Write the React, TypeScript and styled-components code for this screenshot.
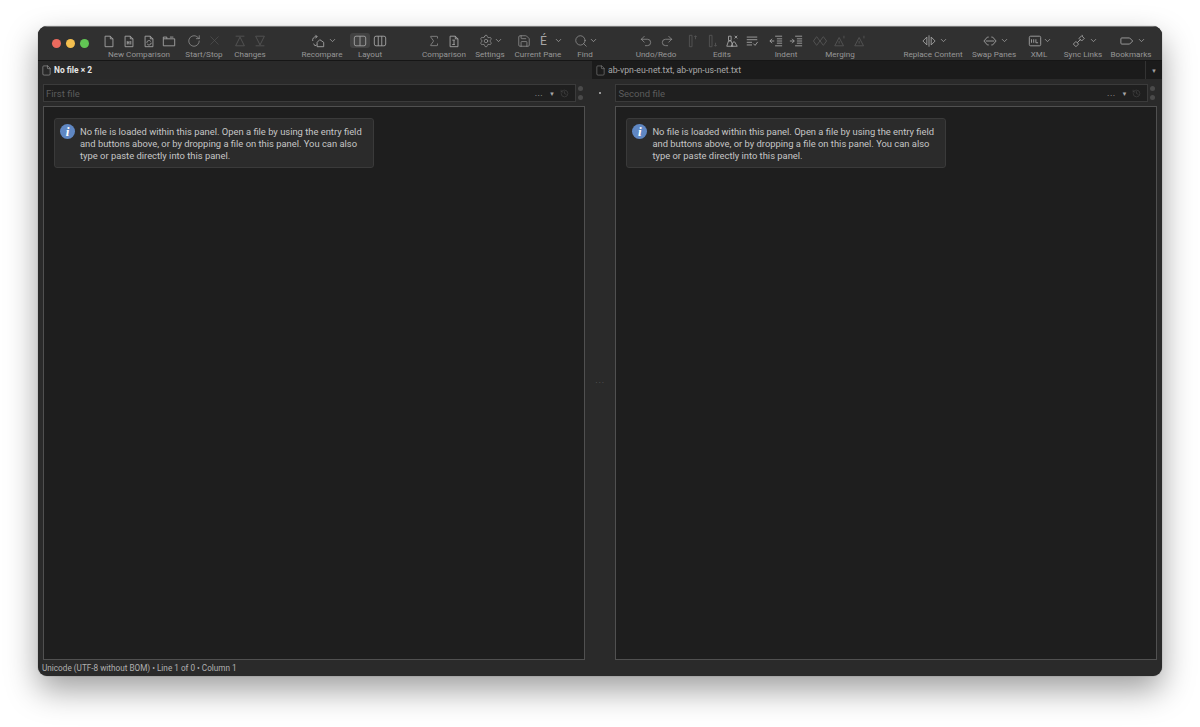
import * as React from 'react';
import styled, { createGlobalStyle } from 'styled-components';
import { ChevronDown, File, History, Redo2, RotateCw, Save, Search, Settings, Sigma, Undo2, X } from 'lucide-react';

const GlobalStyle = createGlobalStyle`
	html, body {
		margin: 0;
		padding: 0;
		background: #fff;
	}
	* {
		box-sizing: border-box;
	}
`;

const Page = styled.div`
	width: 1200px;
	height: 727px;
	padding: 26px 38px 51px;
	font-family: Roboto, "Liberation Sans", sans-serif;
	overflow: hidden;
`;

const Window = styled.div`
	height: 650px;
	display: flex;
	flex-direction: column;
	background: #2a2a2a;
	border-radius: 9px;
	overflow: hidden;
	box-shadow: 0 14px 32px rgba(0, 0, 0, 0.38), 0 0 1px rgba(0, 0, 0, 0.6);
`;

const Toolbar = styled.div`
	height: 35px;
	flex: none;
	display: flex;
	background: #303030;
	border-top: 1px solid #777;
	border-bottom: 1px solid #161616;
`;

const Lights = styled.div`
	width: 61px;
	flex: none;
	display: flex;
	gap: 5px;
	padding: 12px 0 0 14px;
`;

const Light = styled.span<{ $color: string }>`
	width: 9px;
	height: 9px;
	border-radius: 50%;
	background: ${p => p.$color};
`;

const ToolGroup = styled.div<{ $w: number; $ml: number }>`
	width: ${p => p.$w}px;
	margin-left: ${p => p.$ml}px;
	flex: none;
	display: flex;
	flex-direction: column;
	align-items: center;
`;

const IconRow = styled.div`
	height: 22px;
	display: flex;
	align-items: center;
	justify-content: center;
	padding-top: 5px;
`;

const ToolLabel = styled.div`
	font-size: 8.1px;
	line-height: 11px;
	color: #979797;
	white-space: nowrap;
`;

const Slot = styled.span<{ $off?: boolean; $on?: boolean; $w?: number }>`
	width: ${p => p.$w ?? 20}px;
	height: 15px;
	display: flex;
	align-items: center;
	justify-content: center;
	color: ${p => (p.$off ? '#565656' : '#a6a6a6')};
	font-size: 12px;
	border-radius: 3px;
	background: ${p => (p.$on ? '#424242' : 'transparent')};
`;

const Caret = () => (
	<Slot $w={9}>
		<ChevronDown size={9} strokeWidth={2} />
	</Slot>
);

const Svg = styled.svg.attrs({ viewBox: '0 0 16 16', fill: 'none', stroke: 'currentColor', strokeWidth: 1 })`
	width: 14px;
	height: 14px;
`;

const Doc = ({ children }: { children?: React.ReactNode }) => (
	<Svg>
		<path d="M3.5 2.5h6l3 3v9h-9z M9.5 2.5v3h3" />
		{children}
	</Svg>
);

const FolderTab = () => (
	<Svg>
		<path d="M1.5 5.5h13v8h-13z M1.5 5.5v-2h4v2 M9 3.5h4" />
	</Svg>
);

const TriUp = () => (
	<Svg>
		<path d="M3 2.500h10 M8 3.500l5 10h-10z" />
	</Svg>
);

const TriDown = () => (
	<Svg>
		<path d="M3 13.500h10 M8 12.500l5-10h-10z" />
	</Svg>
);

const RecompareIcon = () => (
	<Svg>
		<path d="M2 8a4 4 0 0 1 4-5h1 M5 1l2 2-2 2 M7 9.500l3-3 4.500 3v5h-7.500z M3 11l1.500 2.500 2-1" />
	</Svg>
);

const Columns = ({ n }: { n: number }) => (
	<Svg>
		<rect x="1.500" y="2.500" width="13" height="11" rx="2" />
		{n === 2 ? <path d="M8 2.500v11" /> : <path d="M6 2.500v11 M10 2.500v11" />}
	</Svg>
);

const BarUp = () => (
	<Svg>
		<path d="M5 1.500h3v13h-3z M12 6v-4 M10.500 3.500l1.500-1.500 1.500 1.500" />
	</Svg>
);

const BarDown = () => (
	<Svg>
		<path d="M5 1.500h3v13h-3z M12 10v4 M10.500 12.500l1.500 1.500 1.500-1.500" />
	</Svg>
);

const PeopleX = () => (
	<Svg>
		<path d="M4 2.500h3v5h-3z M2 14l2-6h3l2 6z M7 14l2.500-5 1.500 0 3 5z M11 2l3 3 M14 2l-3 3" />
	</Svg>
);

const ListCheck = () => (
	<Svg>
		<path d="M2 3.500h12 M2 6.500h12 M2 9.500h6 M2 12.500h6 M9.500 11l2 2 3-4" />
	</Svg>
);

const Outdent = () => (
	<Svg>
		<path d="M7 2.500h8 M9 5.500h6 M9 8h6 M9 10.500h6 M7 13.500h8 M6 8h-5 M3.500 5.500l-2.500 2.500 2.500 2.500" />
	</Svg>
);

const Indent = () => (
	<Svg>
		<path d="M7 2.500h8 M9 5.500h6 M9 8h6 M9 10.500h6 M7 13.500h8 M1 8h5 M3.500 5.500l2.500 2.500-2.500 2.500" />
	</Svg>
);

const Diamonds = () => (
	<Svg>
		<path d="M4.200 3l3.700 5-3.700 5-3.700-5z M11.800 3l3.700 5-3.700 5-3.700-5z" />
	</Svg>
);

const WarnUp = () => (
	<Svg>
		<path d="M7 4l5 9.500h-10z M7 8v3 M12.500 5v-3" />
	</Svg>
);

const ReplaceIcon = () => (
	<Svg>
		<path d="M5.500 3.500l-4.500 4.500 4.500 4.500z M10.500 3.500l4.500 4.500-4.500 4.500z M8 1.500v13" />
	</Svg>
);

const SwapIcon = () => (
	<Svg>
		<path d="M5 3.500l-4 4.500 4 4.500 M11 3.500l4 4.500-4 4.500 M5 3.500h1.500 M5 12.500h1.500 M11 3.500h-1.500 M11 12.500h-1.500 M3 8h10" />
	</Svg>
);

const XmlIcon = () => (
	<Svg>
		<rect x="1.500" y="2.500" width="13" height="11" rx="1.500" />
		<path d="M4 6v4 M6.500 6v4 M9 6v4h2.500" />
	</Svg>
);

const LinkIcon = () => (
	<Svg>
		<path d="M1.500 11.500l3-3 3 3-3 3z M8 5l3-3 3 3-3 3z M6 10l4-4 M11.500 1l.5 1" />
	</Svg>
);

const TagIcon = () => (
	<Svg>
		<path d="M2 4.500h9l3.500 3.500-3.500 3.500h-9a1 1 0 0 1-1-1v-5a1 1 0 0 1 1-1z" />
	</Svg>
);

const Lucide = {
	size: 14,
	strokeWidth: 1.1
};

interface ToolDef {
	label: string;
	w: number;
	ml: number;
	icons: React.ReactNode;
}

const tools: ToolDef[] = [
	{
		label: 'New Comparison', w: 80, ml: 0, icons: (
			<>
				<Slot><Doc /></Slot>
				<Slot><Doc><path d="M6 8v4 M8 8v4 M6 10h2 M10 8v4" /></Doc></Slot>
				<Slot><Doc><path d="M5.500 10a2.500 2.500 0 0 1 4.500-1.500 M10.500 10a2.500 2.500 0 0 1-4.500 1.500" /></Doc></Slot>
				<Slot><FolderTab /></Slot>
			</>
		)
	},
	{
		label: 'Start/Stop', w: 40, ml: 5, icons: (
			<>
				<Slot><RotateCw {...Lucide} /></Slot>
				<Slot $off><X size={15} strokeWidth={1} /></Slot>
			</>
		)
	},
	{
		label: 'Changes', w: 40, ml: 6, icons: (
			<>
				<Slot $off><TriUp /></Slot>
				<Slot $off><TriDown /></Slot>
			</>
		)
	},
	{
		label: 'Recompare', w: 44, ml: 30, icons: (
			<>
				<Slot><RecompareIcon /></Slot>
				<Caret />
			</>
		)
	},
	{
		label: 'Layout', w: 40, ml: 6, icons: (
			<>
				<Slot $on><Columns n={2} /></Slot>
				<Slot><Columns n={3} /></Slot>
			</>
		)
	},
	{
		label: 'Comparison', w: 46, ml: 31, icons: (
			<>
				<Slot><Sigma {...Lucide} /></Slot>
				<Slot><Doc><path d="M6 7h3 M8 7v5 M6 12h3" /></Doc></Slot>
			</>
		)
	},
	{
		label: 'Settings', w: 34, ml: 6, icons: (
			<>
				<Slot $w={16}><Settings {...Lucide} /></Slot>
				<Caret />
			</>
		)
	},
	{
		label: 'Current Pane', w: 50, ml: 6, icons: (
			<>
				<Slot><Save {...Lucide} /></Slot>
				<Slot>É</Slot>
				<Caret />
			</>
		)
	},
	{
		label: 'Find', w: 30, ml: 7, icons: (
			<>
				<Slot $w={16}><Search {...Lucide} /></Slot>
				<Caret />
			</>
		)
	},
	{
		label: 'Undo/Redo', w: 44, ml: 34, icons: (
			<>
				<Slot $w={21}><Undo2 {...Lucide} /></Slot>
				<Slot $w={21}><Redo2 {...Lucide} /></Slot>
			</>
		)
	},
	{
		label: 'Edits', w: 80, ml: 4, icons: (
			<>
				<Slot $off><BarUp /></Slot>
				<Slot $off><BarDown /></Slot>
				<Slot><PeopleX /></Slot>
				<Slot><ListCheck /></Slot>
			</>
		)
	},
	{
		label: 'Indent', w: 40, ml: 4, icons: (
			<>
				<Slot><Outdent /></Slot>
				<Slot><Indent /></Slot>
			</>
		)
	},
	{
		label: 'Merging', w: 60, ml: 4, icons: (
			<>
				<Slot $off><Diamonds /></Slot>
				<Slot $off><WarnUp /></Slot>
				<Slot $off><WarnUp /></Slot>
			</>
		)
	},
	{
		label: 'Replace Content', w: 64, ml: 31, icons: (
			<>
				<Slot><ReplaceIcon /></Slot>
				<Caret />
			</>
		)
	},
	{
		label: 'Swap Panes', w: 46, ml: 6, icons: (
			<>
				<Slot><SwapIcon /></Slot>
				<Caret />
			</>
		)
	},
	{
		label: 'XML', w: 30, ml: 7, icons: (
			<>
				<Slot $w={16}><XmlIcon /></Slot>
				<Caret />
			</>
		)
	},
	{
		label: 'Sync Links', w: 42, ml: 8, icons: (
			<>
				<Slot><LinkIcon /></Slot>
				<Caret />
			</>
		)
	},
	{
		label: 'Bookmarks', w: 42, ml: 6, icons: (
			<>
				<Slot><TagIcon /></Slot>
				<Caret />
			</>
		)
	}
];

const TabBar = styled.div`
	height: 18px;
	flex: none;
	display: flex;
	background: #1b1b1b;
`;

const Tab = styled.div<{ $active?: boolean }>`
	display: flex;
	align-items: center;
	gap: 2px;
	padding-left: 3px;
	font-size: ${p => (p.$active ? 8.4 : 8.7)}px;
	font-weight: ${p => (p.$active ? 700 : 400)};
	color: ${p => (p.$active ? '#e6e6e6' : '#a8a8a8')};
	background: ${p => (p.$active ? '#292929' : '#1b1b1b')};
	width: ${p => (p.$active ? 552 : 553)}px;
	flex: none;
	svg {
		color: ${p => (p.$active ? '#bdbdbd' : '#999')};
	}
`;

const TabGap = styled.div`
	width: 2px;
	flex: none;
	background: #292929;
`;

const TabMenu = styled.div`
	flex: 1;
	display: flex;
	align-items: center;
	justify-content: center;
	border-left: 1px solid #333;
	color: #a0a0a0;
	font-size: 6px;
`;

const Body = styled.div`
	flex: 1;
	min-height: 0;
	display: grid;
	grid-template-columns: 542px 30.4px 541.6px;
	padding: 5px 5px 0;
`;

const Pane = styled.div`
	display: flex;
	flex-direction: column;
	gap: 4px;
	min-height: 0;
`;

const EntryRow = styled.div`
	height: 18px;
	flex: none;
	display: flex;
`;

const Entry = styled.div`
	width: 533px;
	flex: none;
	display: flex;
	align-items: center;
	padding: 0 6px 0 2px;
	background: #1f1f1f;
	border: 1px solid #3b3b3b;
	color: #5c5c5c;
	font-size: 9.5px;
`;

const EntryText = styled.span`
	flex: 1;
`;

const EntryDots = styled.span`
	color: #a0a0a0;
	font-size: 9px;
	margin-right: 6px;
	letter-spacing: 0.4px;
`;

const EntryArrow = styled.span`
	color: #a8a8a8;
	font-size: 6px;
	margin-right: 5px;
`;

const Grip = styled.div`
	flex: 1;
	display: flex;
	flex-direction: column;
	align-items: center;
	justify-content: center;
	gap: 4px;
`;

const GripDot = styled.span`
	width: 5px;
	height: 5px;
	border-radius: 50%;
	background: #4a4a4a;
`;

const Editor = styled.div`
	flex: 1;
	min-height: 0;
	background: #1e1e1e;
	border: 1px solid #505050;
	padding: 11px 10px;
`;

const InfoCard = styled.div`
	width: 320px;
	height: 50px;
	display: flex;
	gap: 5px;
	padding: 5px;
	background: #2b2b2b;
	border: 1px solid #3a3a3a;
	border-radius: 3px;
`;

const InfoBadge = styled.span`
	width: 15px;
	height: 15px;
	flex: none;
	display: flex;
	align-items: center;
	justify-content: center;
	border-radius: 50%;
	background: #5f87c3;
	color: #fff;
	font-family: "Liberation Serif", serif;
	font-style: italic;
	font-weight: 700;
	font-size: 13px;
`;

const InfoText = styled.div`
	padding-top: 2px;
	font-size: 9.4px;
	line-height: 12px;
	color: #c6c6c6;
	white-space: nowrap;
`;

const Divider = styled.div`
	position: relative;
	display: flex;
	justify-content: center;
	padding-top: 8px;
`;

const DividerDot = styled.span`
	width: 2px;
	height: 2px;
	border-radius: 50%;
	background: #bbb;
`;

const DividerHandle = styled.span`
	position: absolute;
	top: 294px;
	left: 0;
	right: 0;
	text-align: center;
	color: #5a5a5a;
	font-size: 9px;
	letter-spacing: 1px;
`;

const StatusBar = styled.div`
	height: 16px;
	flex: none;
	padding-left: 4px;
	font-size: 8.2px;
	line-height: 17px;
	color: #b0b0b0;
`;

const message = [
	'No file is loaded within this panel. Open a file by using the entry field',
	'and buttons above, or by dropping a file on this panel. You can also',
	'type or paste directly into this panel.'
];

const FilePane = ({ placeholder }: { placeholder: string }) => (
	<Pane>
		<EntryRow>
			<Entry>
				<EntryText>{placeholder}</EntryText>
				<EntryDots>...</EntryDots>
				<EntryArrow>▼</EntryArrow>
				<History size={9} strokeWidth={1.2} color="#555" />
			</Entry>
			<Grip>
				<GripDot />
				<GripDot />
			</Grip>
		</EntryRow>
		<Editor>
			<InfoCard>
				<InfoBadge>i</InfoBadge>
				<InfoText>
					{message.map(line => (
						<div key={line}>{line}</div>
					))}
				</InfoText>
			</InfoCard>
		</Editor>
	</Pane>
);

export default function App() {
	return (
		<Page>
			<GlobalStyle />
			<Window>
				<Toolbar>
					<Lights>
						<Light $color="#ec6a5e" />
						<Light $color="#f4bf4f" />
						<Light $color="#61c554" />
					</Lights>
					{tools.map(t => (
						<ToolGroup key={t.label} $w={t.w} $ml={t.ml}>
							<IconRow>{t.icons}</IconRow>
							<ToolLabel>{t.label}</ToolLabel>
						</ToolGroup>
					))}
				</Toolbar>
				<TabBar>
					<Tab $active>
						<File size={11} strokeWidth={1.1} />
						No file × 2
					</Tab>
					<TabGap />
					<Tab>
						<File size={11} strokeWidth={1.1} />
						ab-vpn-eu-net.txt, ab-vpn-us-net.txt
					</Tab>
					<TabMenu>▼</TabMenu>
				</TabBar>
				<Body>
					<FilePane placeholder="First file" />
					<Divider>
						<DividerDot />
						<DividerHandle>···</DividerHandle>
					</Divider>
					<FilePane placeholder="Second file" />
				</Body>
				<StatusBar>Unicode (UTF-8 without BOM) • Line 1 of 0 • Column 1</StatusBar>
			</Window>
		</Page>
	);
}
